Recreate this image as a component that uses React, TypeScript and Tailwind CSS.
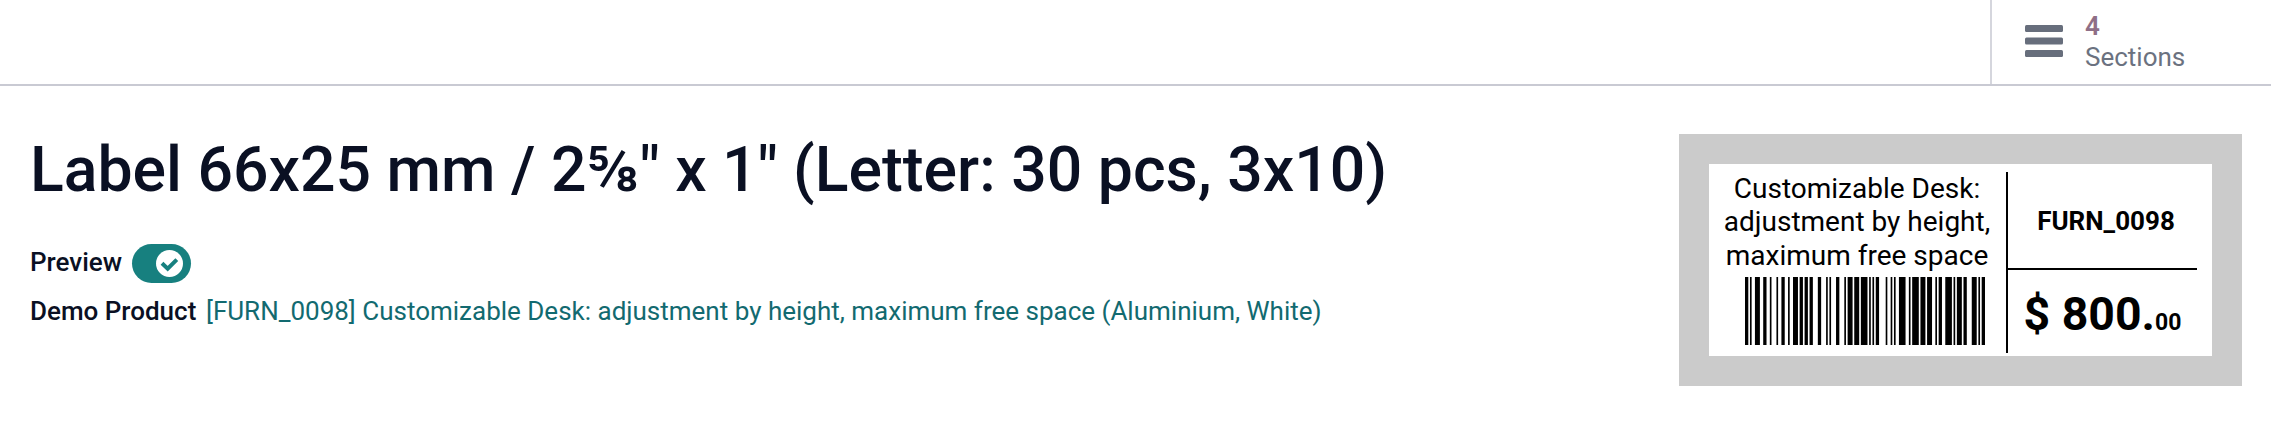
// Code 128 symbol patterns, indexed by symbol value: alternating bar and space widths.
const CODES = "212222 222122 222221 121223 121322 131222 122213 122312 132212 221213 221312 231212 112232 122132 122231 113222 123122 123221 223211 221132 221231 213212 223112 312131 311222 321122 321221 312212 322112 322211 212123 212321 232121 111323 131123 131321 112313 132113 132311 211313 231113 231311 112133 112331 132131 113123 113321 133121 313121 211331 231131 213113 213311 213131 311123 311321 331121 312113 312311 332111 314111 221411 431111 111224 111422 121124 121421 141122 141221 112214 112412 122114 122411 142112 142211 241211 221114 413111 241112 134111 111242 121142 121241 114212 124112 124211 411212 421112 421211 212141 214121 412121 111143 111341 131141 114113 114311 411113 411311 113141 114131 311141 411131 211412 211214 211232 2331112".split(" ");
// Start C, eight digit pairs, switch to B, "9", check symbol, stop.
const VALUES = [105, 10, 20, 30, 40, 50, 60, 70, 80, 100, 25, 102, 106];

function Barcode() {
  const widths = VALUES.flatMap((v) => CODES[v].split("").map(Number));
  const total = widths.reduce((a, b) => a + b, 0);
  let x = 0;
  return (
    <svg className="block h-[68px] w-60" viewBox={`0 0 ${total} 68`} preserveAspectRatio="none">
      {widths.map((w, i) => {
        const at = x;
        x += w;
        return i % 2 === 0 ? <rect key={i} x={at} y={0} width={w} height={68} /> : null;
      })}
    </svg>
  );
}

export default function App() {
  return (
    <div className="flex h-[435px] w-[2271px] flex-col bg-white font-['Roboto',sans-serif] text-[26px] text-[#0a1023]">
      <header className="flex h-[86px] justify-end border-b-2 border-[#c9cad3]">
        <div className="flex w-[281px] border-l-2 border-[#d5d6dd] pl-[33px] text-[#6b7280]">
          <svg className="mt-[25px] h-8 w-[38px]" viewBox="0 0 38 32" fill="#676e7c">
            <rect y="0" width="38" height="7" rx="1.5" />
            <rect y="12.5" width="38" height="7" rx="1.5" />
            <rect y="25" width="38" height="7" rx="1.5" />
          </svg>
          <div className="ml-[22px] mt-[11px] leading-[31px]">
            <div className="font-semibold text-[#8f6f87]">4</div>
            <div>Sections</div>
          </div>
        </div>
      </header>
      <main className="flex justify-between pl-[30px] pr-[29px]">
        <div>
          <h1 className="mt-[46px] whitespace-nowrap text-[62.5px] font-medium leading-[76px]">
            Label 66x25 mm / 2⅝" x 1" (Letter: 30 pcs, 3x10)
          </h1>
          <div className="mt-[36px] flex h-[39px] items-center font-medium">
            <span className="-mt-[3px] w-[102px]">Preview</span>
            <span className="flex h-[39px] w-[59px] items-center justify-end rounded-full bg-[#17807f] pr-2">
              <svg className="h-[27px] w-[27px]" viewBox="0 0 27 27">
                <circle cx="13.5" cy="13.5" r="13.5" fill="white" />
                <path d="M6 13.3 11.7 18.7 20.8 9.7" fill="none" stroke="#17807f" strokeWidth="4" />
              </svg>
            </span>
          </div>
          <div className="mt-[9px] flex whitespace-nowrap leading-[39px]">
            <span className="w-[176px] font-medium">Demo Product</span>
            <span className="text-[#126a70]">[FURN_0098] Customizable Desk: adjustment by height, maximum free space (Aluminium, White)</span>
          </div>
        </div>
        <section className="mt-12 h-[252px] w-[563px] bg-[#cbcbcb] p-[30px] text-black">
          <div className="flex h-48 bg-white px-[15px] pt-2">
            <div className="w-[282px] text-center">
              <div className="-ml-2 mr-2 whitespace-nowrap text-[28px] leading-[33px]">
                <div>Customizable Desk:</div>
                <div>adjustment by height,</div>
                <div className="mt-px">maximum free space</div>
              </div>
              <div className="mt-[5px] flex pl-[21px]"><Barcode /></div>
            </div>
            <div className="h-[181px] grow border-l-2 border-black text-center font-bold">
              <div className="flex h-[98px] items-center justify-center border-b-2 border-black pl-[7px] pt-0.5 text-[26px]">FURN_0098</div>
              <div className="flex items-baseline justify-center pt-[11px] text-[46.4px] leading-[66px]">
                <span>$ 800.</span><span className="text-[23px]">00</span>
              </div>
            </div>
          </div>
        </section>
      </main>
    </div>
  );
}
